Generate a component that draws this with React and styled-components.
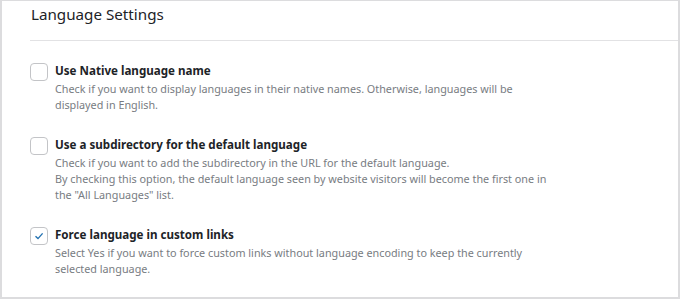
import React, { useState } from "react";
import styled, { createGlobalStyle } from "styled-components";

const GlobalStyle = createGlobalStyle`
  body {
    margin: 0;
    background: #f0f0f1;
    font-family: "Noto Sans", "Open Sans", sans-serif;
  }
`;

const Panel = styled.section`
  box-sizing: border-box;
  width: 680px;
  height: 299px;
  background: #fff;
  border: 1px solid #dcdcde;
  border-width: 1px 2px 2px 2px;
`;

const Header = styled.h2`
  margin: 0 0 0 28px;
  height: 40px;
  box-sizing: border-box;
  padding: 2px 0 0 1px;
  border-bottom: 1px solid #e2e2e4;
  font-size: 15.2px;
  font-weight: 400;
  line-height: 22px;
  color: #1d2327;
`;

const List = styled.div`
  display: flex;
  flex-direction: column;
  gap: 23px;
  padding: 21px 0 0 28px;
`;

const Option = styled.label`
  display: flex;
  gap: 7px;
  align-items: flex-start;
  cursor: pointer;
`;

const Box = styled.span`
  flex: none;
  box-sizing: border-box;
  width: 18px;
  height: 18px;
  margin-top: 1px;
  border: 1px solid #c3c4c7;
  border-radius: 4px;
  background: #fff;
  display: flex;
  align-items: center;
  justify-content: center;
`;

const Texts = styled.div`
  display: flex;
  flex-direction: column;
`;

const Title = styled.span`
  font-size: 11.6px;
  font-weight: 700;
  line-height: 18px;
  color: #1d2327;
`;

const Desc = styled.p`
  margin: 1px 0 0;
  white-space: nowrap;
  font-size: 10.8px;
  line-height: 16px;
  color: #787c82;
`;

const options = [
  {
    title: "Use Native language name",
    desc: [
      "Check if you want to display languages in their native names. Otherwise, languages will be",
      "displayed in English.",
    ],
    checked: false,
  },
  {
    title: "Use a subdirectory for the default language",
    desc: [
      "Check if you want to add the subdirectory in the URL for the default language.",
      "By checking this option, the default language seen by website visitors will become the first one in",
      'the "All Languages" list.',
    ],
    checked: false,
  },
  {
    title: "Force language in custom links",
    desc: [
      "Select Yes if you want to force custom links without language encoding to keep the currently",
      "selected language.",
    ],
    checked: true,
  },
];

const Check = () => (
  <svg width="12" height="12" viewBox="0 0 12 12">
    <path d="M2.5 6.3 L5 8.6 L9.6 3.4" fill="none" stroke="#2271b1" strokeWidth="1.4" />
  </svg>
);

export default function App() {
  const [state, setState] = useState(options.map((o) => o.checked));

  return (
    <>
      <GlobalStyle />
      <Panel>
        <Header>Language Settings</Header>
        <List>
          {options.map((o, i) => (
            <Option
              key={o.title}
              onClick={() => setState((s) => s.map((v, j) => (j === i ? !v : v)))}
            >
              <Box>{state[i] && <Check />}</Box>
              <Texts>
                <Title>{o.title}</Title>
                <Desc>
                  {o.desc.map((line) => (
                    <React.Fragment key={line}>
                      {line}
                      <br />
                    </React.Fragment>
                  ))}
                </Desc>
              </Texts>
            </Option>
          ))}
        </List>
      </Panel>
    </>
  );
}
